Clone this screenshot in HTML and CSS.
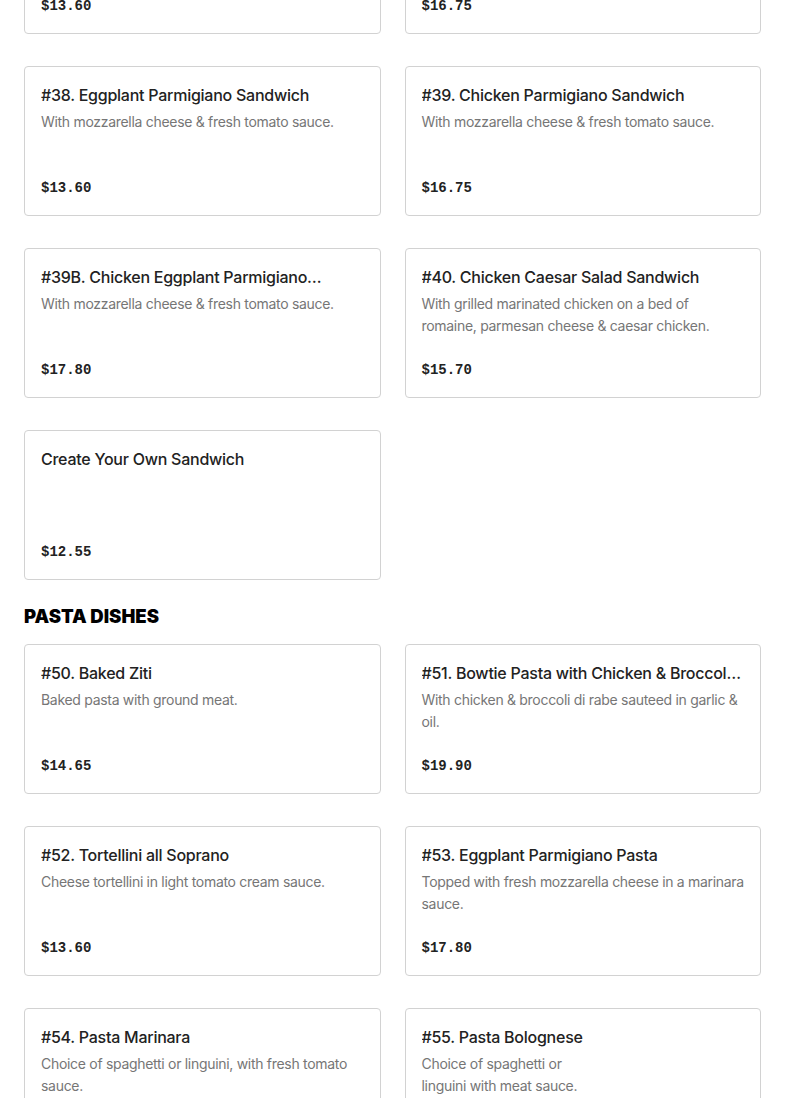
FILE: index.html
```html
<!DOCTYPE html>
<html>
<head>
<meta charset="utf-8">
<link rel="stylesheet" href="styles.css">
</head>
<body>
<div class="menu">
  <div class="grid">
    <div class="card"><div class="title">#36. Sandwich</div><div class="desc"></div><div class="price">$13.60</div></div>
    <div class="card"><div class="title">#37. Sandwich</div><div class="desc"></div><div class="price">$16.75</div></div>
    <div class="card"><div class="title">#38. Eggplant Parmigiano Sandwich</div><div class="desc">With mozzarella cheese &amp; fresh tomato sauce.</div><div class="price">$13.60</div></div>
    <div class="card"><div class="title">#39. Chicken Parmigiano Sandwich</div><div class="desc">With mozzarella cheese &amp; fresh tomato sauce.</div><div class="price">$16.75</div></div>
    <div class="card"><div class="title">#39B. Chicken Eggplant Parmigiano Sandwich</div><div class="desc">With mozzarella cheese &amp; fresh tomato sauce.</div><div class="price">$17.80</div></div>
    <div class="card"><div class="title">#40. Chicken Caesar Salad Sandwich</div><div class="desc">With grilled marinated chicken on a bed of romaine, parmesan cheese &amp; caesar chicken.</div><div class="price">$15.70</div></div>
    <div class="card"><div class="title">Create Your Own Sandwich</div><div class="desc"></div><div class="price">$12.55</div></div>
  </div>
  <h2 class="section">PASTA DISHES</h2>
  <div class="grid">
    <div class="card"><div class="title">#50. Baked Ziti</div><div class="desc">Baked pasta with ground meat.</div><div class="price">$14.65</div></div>
    <div class="card"><div class="title">#51. Bowtie Pasta with Chicken &amp; Broccoli Rabe</div><div class="desc">With chicken &amp; broccoli di rabe sauteed in garlic &amp; oil.</div><div class="price">$19.90</div></div>
    <div class="card"><div class="title">#52. Tortellini all Soprano</div><div class="desc">Cheese tortellini in light tomato cream sauce.</div><div class="price">$13.60</div></div>
    <div class="card"><div class="title">#53. Eggplant Parmigiano Pasta</div><div class="desc">Topped with fresh mozzarella cheese in a marinara sauce.</div><div class="price">$17.80</div></div>
    <div class="card"><div class="title">#54. Pasta Marinara</div><div class="desc">Choice of spaghetti or linguini, with fresh tomato sauce.</div><div class="price">$13.60</div></div>
    <div class="card"><div class="title">#55. Pasta Bolognese</div><div class="desc">Choice of spaghetti or<br>linguini with meat sauce.</div><div class="price">$15.70</div></div>
  </div>
</div>
</body>
</html>
```
FILE: styles.css
```css
html, body { margin: 0; padding: 0; background: #fff; }
body { font-family: Inter, "Noto Sans", sans-serif; color: #1f1f1f; }
.menu { padding: 0 24px; margin-top: -116px; }
.grid { display: grid; grid-template-columns: 1fr 1fr; column-gap: 24px; row-gap: 32px; }
.card {
  box-sizing: border-box;
  height: 150px;
  border: 1px solid #d2d2d2;
  border-radius: 4px;
  padding: 16px;
  display: flex;
  flex-direction: column;
  background: #fff;
}
.title {
  font-size: 16px;
  font-weight: 500;
  line-height: 24px;
  letter-spacing: -0.25px;
  color: #222;
  display: -webkit-box;
  -webkit-line-clamp: 1;
  -webkit-box-orient: vertical;
  overflow: hidden;
}
.desc {
  margin-top: 4px;
  font-size: 14px;
  line-height: 22px;
  letter-spacing: -0.3px;
  color: #767676;
}
.price {
  margin-top: auto;
  font-family: "Liberation Mono", monospace;
  font-weight: 700;
  font-size: 14px;
  line-height: 22px;
  color: #222;
}
.section {
  margin: 24px 0 16px;
  font-size: 18.5px;
  line-height: 24px;
  font-weight: 900;
  color: #000;
}
```
